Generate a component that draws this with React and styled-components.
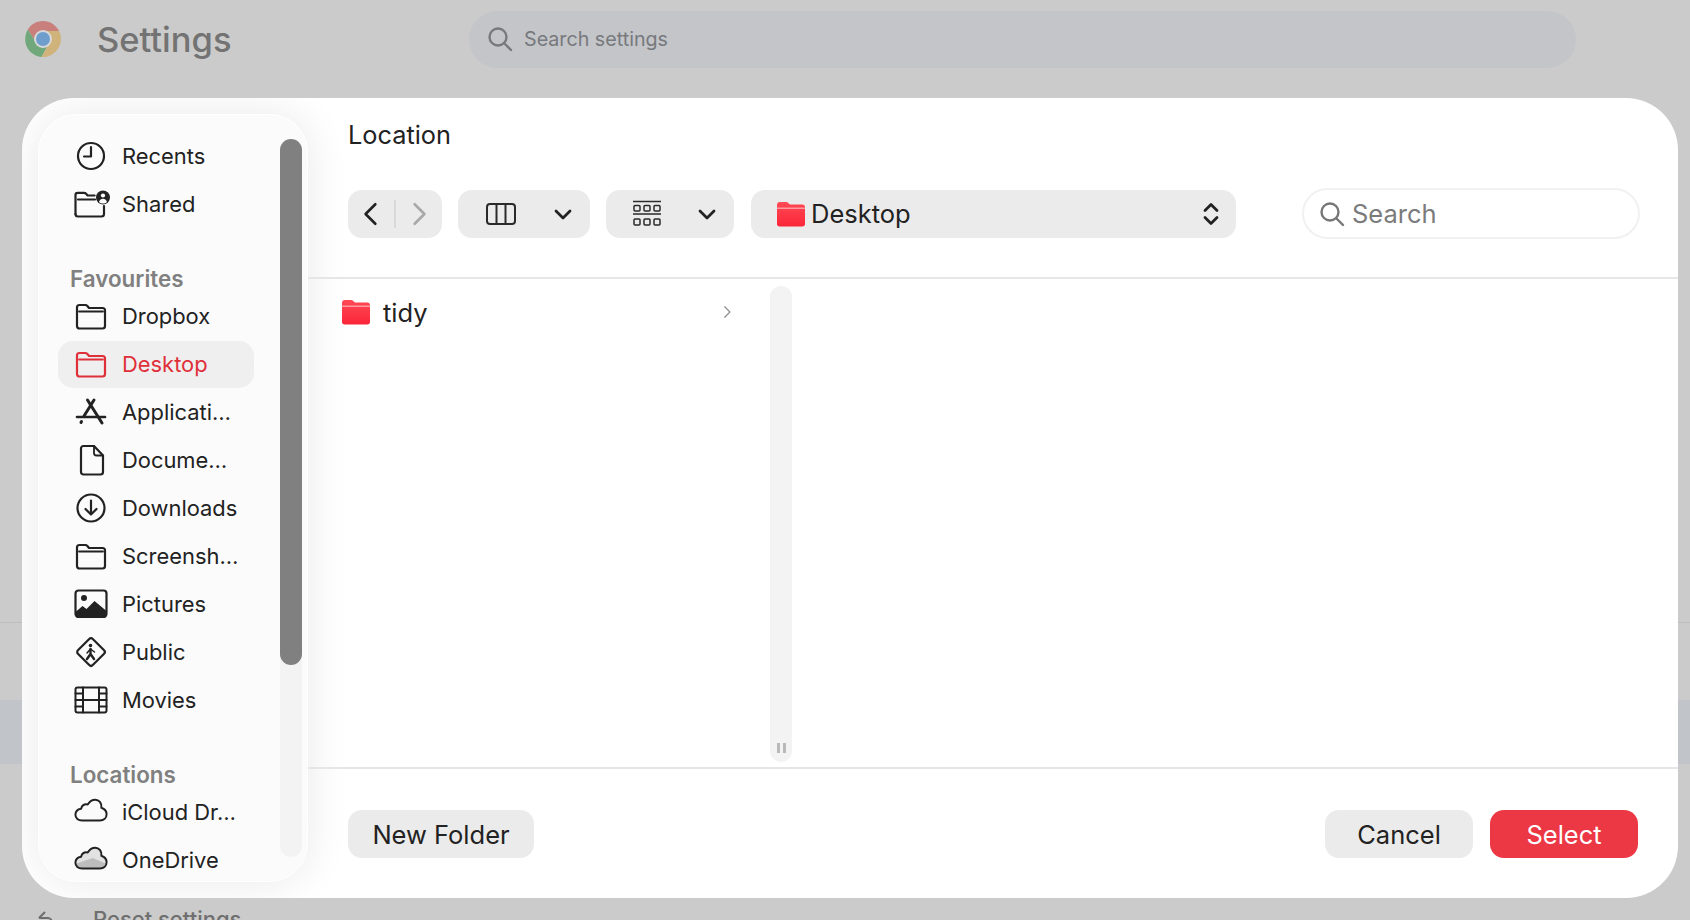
import React from 'react'
import styled, { createGlobalStyle } from 'styled-components'

const GlobalStyle= createGlobalStyle`
  html, body {
    margin: 0;
    padding: 0;
    background: #cbcbcb;
    font-family: Inter, "Liberation Sans", sans-serif;
    -webkit-font-smoothing: antialiased;
  }
`

const Page= styled.div`
  position: relative;
  width: 1690px;
  height: 920px;
  overflow: hidden;
  background: #cbcbcb;
`
const TopBar= styled.header`
  display: flex;
  align-items: center;
  height: 80px;
  padding-left: 25px;
`
const ChromeLogo= styled.svg`
  width: 36px;
  height: 38px;
  margin-top: -2px;
`
const PageTitle= styled.h1`
  margin: -2px 0 0 36px;
  width: 372px;
  font-size: 34.5px;
  font-weight: 500;
  color: #737373;
`
const TopSearch= styled.div`
  display: flex;
  align-items: center;
  gap: 11px;
  width: 1107px;
  height: 57px;
  margin-top: -2px;
  padding-left: 18px;
  box-sizing: border-box;
  border-radius: 29px;
  background: #c3c5c9;
  color: #77797d;
  font-size: 19.7px;
`
const BackNav= styled.nav`
  display: flex;
  flex-direction: column;
  padding-top: 542px;
`
const BackLine= styled.div`
  height: 1px;
  background: #bdbdbd;
`
const BackActive= styled.div`
  height: 64px;
  margin-top: 77px;
  background: #c1c4c8;
`
const BackReset= styled.div`
  display: flex;
  align-items: center;
  gap: 40px;
  margin-top: 142px;
  padding-left: 37px;
  font-size: 22px;
  font-weight: 500;
  color: #6f6f6f;
`

const Modal= styled.div`
  position: absolute;
  left: 22px;
  top: 98px;
  display: flex;
  width: 1656px;
  height: 800px;
  border-radius: 52px;
  overflow: hidden;
  background: #fff;
`
const Sidebar= styled.aside`
  flex: none;
  display: flex;
  width: 270px;
  margin: 16px 0 16px 16px;
  box-sizing: border-box;
  border: 1.5px solid #fff;
  border-radius: 38px;
  background: #fbfbfb;
  box-shadow: 0 0 44px rgba(0, 0, 0, 0.09);
  overflow: hidden;
`
const SideList= styled.div`
  flex: 1;
  min-width: 0;
  padding: 17.5px 0 0 19px;
`
const ScrollTrack= styled.div`
  flex: none;
  width: 22px;
  height: 718px;
  margin: 24px 5px 0 0;
  border-radius: 11px;
  background: #f3f3f3;
`
const ScrollThumb= styled.div`
  height: 526px;
  border-radius: 11px;
  background: #808080;
`
const SideLabel= styled.div`
  display: flex;
  align-items: flex-end;
  height: ${p=> p.$h}px;
  padding-left: 12px;
  font-size: 22.4px;
  line-height: 28px;
  font-weight: 600;
  color: #808080;
`
const SideRow= styled.div`
  display: flex;
  align-items: center;
  gap: 14px;
  height: 47px;
  margin-bottom: 1px;
  padding-left: 16px;
  width: 196px;
  box-sizing: border-box;
  border-radius: 15px;
  font-size: 21.9px;
  white-space: nowrap;
  color: ${p=> p.$active ? '#df303a' : '#222'};
  background: ${p=> p.$active ? '#efefef' : 'transparent'};
`
const IconBox= styled.span`
  flex: none;
  display: flex;
  align-items: center;
  justify-content: center;
  width: 34px;
  height: 34px;
`

const Main= styled.main`
  flex: 1;
  min-width: 0;
  display: flex;
  flex-direction: column;
`
const Head= styled.div`
  flex: none;
  height: 181px;
  padding: 23px 38px 0 40px;
  box-sizing: border-box;
  border-bottom: 2px solid #e6e6e6;
`
const Title= styled.div`
  font-size: 25.3px;
  line-height: 28px;
  color: #222;
`
const Toolbar= styled.div`
  display: flex;
  align-items: center;
  height: 51px;
  margin-top: 39px;
`
const ToolGroup= styled.div`
  flex: none;
  display: flex;
  align-items: center;
  justify-content: ${p=> p.$between ? 'space-between' : 'center'};
  width: ${p=> p.$w}px;
  height: 48px;
  margin-right: ${p=> p.$gap || 16}px;
  padding: ${p=> p.$pad || '0'};
  box-sizing: border-box;
  border-radius: 14px;
  background: #ebebeb;
`
const NavDivider= styled.span`
  width: 2px;
  height: 28px;
  margin: 0 10px;
  background: #d9d9d9;
`
const PathText= styled.span`
  flex: 1;
  margin-left: 5px;
  font-size: 25.5px;
  color: #222;
`
const SearchBox= styled.div`
  flex: none;
  display: flex;
  align-items: center;
  gap: 7px;
  width: 338px;
  height: 51px;
  margin-left: auto;
  padding-left: 15px;
  box-sizing: border-box;
  border: 2px solid #f1f1f1;
  border-radius: 26px;
  font-size: 25.5px;
  color: #7b7b7b;
`
const Browser= styled.section`
  flex: 1;
  min-height: 0;
  display: flex;
`
const Column= styled.div`
  flex: none;
  width: 462px;
  padding: 7px 36px 0 33px;
  box-sizing: border-box;
`
const FileRow= styled.div`
  display: flex;
  align-items: center;
  height: 52px;
  font-size: 25.5px;
  color: #222;
`
const FileName= styled.span`
  flex: 1;
  margin-left: 12px;
`
const ColumnHandle= styled.div`
  flex: none;
  display: flex;
  align-items: flex-end;
  justify-content: center;
  gap: 3px;
  width: 22px;
  height: 476px;
  margin-top: 7px;
  padding-bottom: 9px;
  box-sizing: border-box;
  border-radius: 11px;
  background: #f3f3f3;
`
const HandleMark= styled.i`
  width: 3px;
  height: 10px;
  background: #b9b9b9;
`
const Footer= styled.footer`
  flex: none;
  display: flex;
  align-items: flex-start;
  gap: 17px;
  height: 131px;
  padding: 41px 40px 0 40px;
  box-sizing: border-box;
  border-top: 2px solid #e6e6e6;
`
const Button= styled.button`
  display: block;
  width: ${p=> p.$w}px;
  height: 48px;
  margin-left: ${p=> p.$push ? 'auto' : '0'};
  padding: 0;
  border: none;
  border-radius: 14px;
  font-family: inherit;
  font-size: 25.5px;
  color: ${p=> p.$primary ? '#fff' : '#222'};
  background: ${p=> p.$primary ? '#ec3745' : '#ebebeb'};
`

const Ic= ({ children, w= 34, h= 34, color= 'currentColor', sw= 2.2 })=> (
  <svg width={w} height={h} viewBox={`0 0 ${w} ${h}`} fill='none' stroke={color} strokeWidth={sw} strokeLinecap='round' strokeLinejoin='round'>
    {children}
  </svg>
)

const FolderIcon= ()=> (
  <Ic>
    <path d='M3 10V8.500C3 6.800 4 6 5.500 6h5.700c1 0 1.600.3 2.200 1l1.600 2h13.500C30.200 9 31 10 31 11.500V27c0 1.600-1 2.500-2.500 2.500h-23C4 29.500 3 28.600 3 27z'/>
    <path d='M5 12.500h24' strokeWidth='1.800'/>
  </Ic>
)
const ClockIcon= ()=> (
  <Ic>
    <circle cx='17' cy='17' r='13'/>
    <path d='M17 8v9.500H10'/>
  </Ic>
)
const SharedIcon= ()=> (
  <svg width='34' height='34' viewBox='0 0 34 34' fill='none' stroke='currentColor' strokeWidth='2.200' strokeLinecap='round' strokeLinejoin='round' overflow='visible'>
    <path d='M1.500 27V8c0-1.400.8-2.200 2.200-2.200h6.300c1 0 1.500.3 2.100 1l1.500 1.700h7'/>
    <path d='M4 12.500h17'/>
    <path d='M1.500 27c0 1.500 1 2.500 2.400 2.500h23.500c1.500 0 2.600-1 2.600-2.500v-8'/>
    <circle cx='29' cy='10.500' r='7' fill='currentColor' stroke='none'/>
    <circle cx='29' cy='8.500' r='2.100' fill='#fbfbfb' stroke='none'/>
    <path d='M25 15c.8-2.200 2.200-3.200 4-3.200s3.200 1 4 3.200c-1 1-2.500 1.600-4 1.600s-3-.6-4-1.600z' fill='#fbfbfb' stroke='none'/>
  </svg>
)
const AppsIcon= ()=> (
  <Ic sw='3'>
    <path d='M13.500 5l14.500 23M20 5 10 21'/>
    <path d='M3 22h28' strokeWidth='2.600'/>
    <path d='M7.500 26.500 7 27.500'/>
  </Ic>
)
const DocIcon= ()=> (
  <Ic>
    <path d='M7 5.500C7 4 8 3 9.500 3H20l9 9.500V29c0 1.500-1 2.500-2.500 2.500h-17C8 31.500 7 30.500 7 29z'/>
    <path d='M20 3v7c0 1.500 1 2.500 2.500 2.500H29' strokeWidth='1.800'/>
  </Ic>
)
const DownloadIcon= ()=> (
  <Ic>
    <circle cx='17' cy='17' r='13.500'/>
    <path d='M17 9.500v14M11.500 18l5.500 5.500 5.500-5.500'/>
  </Ic>
)
const PictureIcon= ()=> (
  <svg width='34' height='34' viewBox='0 0 34 34'>
    <rect x='1.500' y='3.500' width='31' height='26' rx='3' fill='none' stroke='currentColor' strokeWidth='2.200'/>
    <circle cx='10' cy='11' r='3' fill='currentColor'/>
    <path d='M1.500 25l7-6 4 3 8-8 12 10v5c0 1-1 2-2 2H3.500c-1 0-2-1-2-2z' fill='currentColor'/>
  </svg>
)
const PublicIcon= ()=> (
  <Ic sw='2.200'>
    <rect x='6.500' y='6.500' width='21' height='21' rx='2.500' transform='rotate(45 17 17)'/>
    <circle cx='16.500' cy='10.500' r='1.800' fill='currentColor' stroke='none'/>
    <path d='M16.500 14v5l-3.500 5M16.500 19l3.500 5' strokeWidth='2.400'/>
    <path d='M13 18l3.500-4 4 3' strokeWidth='1.500'/>
  </Ic>
)
const MoviesIcon= ()=> (
  <Ic sw='2'>
    <rect x='1.500' y='4.500' width='31' height='25' rx='2'/>
    <path d='M9 4.500v25M25 4.500v25M9 17h16M1.500 10.500H9M1.500 17H9M1.500 23.500H9M25 10.500h7.500M25 17h7.500M25 23.500h7.500'/>
  </Ic>
)
const cloudShape= 'M8.500 26C4.500 26 1.500 23.500 1.500 20C1.500 16.500 4 14 7.500 13.500C8.500 10 11.500 8.500 14.500 9C16.500 5.800 19.500 4 22.500 4C26.500 4 29.500 7.500 29 12.500C32 13.500 34.500 16 34.500 19.500C34.500 23.500 31.500 26 27.500 26Z'
const CloudIcon= ({ shade })=> (
  <svg width='36' height='34' viewBox='0 0 36 34' fill='none'>
    <path d={cloudShape} fill={shade ? '#e2e2e2' : 'none'}/>
    {shade && <path d='M2 21 20 15 34 21C34 24 31 26 27.500 26H8.500C5 26 2.500 24 2 21Z' fill='#bdbdbd'/>}
    <path d={cloudShape} stroke='currentColor' strokeWidth='2.100' strokeLinejoin='round'/>
  </svg>
)
const RedFolder= ()=> (
  <svg width='30' height='26' viewBox='0 0 30 26'>
    <defs>
      <linearGradient id='redfold' x1='0' y1='0' x2='0' y2='1'>
        <stop offset='0' stopColor='#ff4a55'/>
        <stop offset='1' stopColor='#fb2539'/>
      </linearGradient>
    </defs>
    <path d='M1 4C1 2 2 1 4 1h6c1 0 1.600.3 2.200 1L14 3.500h12.500c1.500 0 2.500 1 2.500 2.500v17c0 1.500-1 2.500-2.500 2.500h-23C2 25.500 1 24.500 1 23z' fill='url(#redfold)'/>
    <path d='M1 6.500h28V8H1z' fill='#ff9aa0'/>
  </svg>
)
const Chevron= ({ dir= 'down', color= '#222', size= 24, sw= 2.8 })=> {
  const paths= {
    down: 'M5 9l7 7 7-7',
    left: 'M16 3 7 12l9 9',
    right: 'M8 3l9 9-9 9',
  }
  return (
    <svg width={size} height={size} viewBox='0 0 24 24' fill='none' stroke={color} strokeWidth={sw} strokeLinecap='round' strokeLinejoin='round'>
      <path d={paths[dir]}/>
    </svg>
  )
}
const Magnifier= ({ size= 26, color= '#777' })=> (
  <svg width={size} height={size} viewBox='0 0 26 26' fill='none' stroke={color} strokeWidth='2.400' strokeLinecap='round'>
    <circle cx='11' cy='11' r='8.500'/>
    <path d='m17.500 17.500 6.500 6.500'/>
  </svg>
)

const Items= {
  top: [
    ['Recents', <ClockIcon/>],
    ['Shared', <SharedIcon/>],
  ],
  favourites: [
    ['Dropbox', <FolderIcon/>],
    ['Desktop', <FolderIcon/>, true],
    ['Applicati…', <AppsIcon/>],
    ['Docume…', <DocIcon/>],
    ['Downloads', <DownloadIcon/>],
    ['Screensh…', <FolderIcon/>],
    ['Pictures', <PictureIcon/>],
    ['Public', <PublicIcon/>],
    ['Movies', <MoviesIcon/>],
  ],
  locations: [
    ['iCloud Dr…', <CloudIcon/>],
    ['OneDrive', <CloudIcon shade/>],
  ],
}

const renderRows= (rows)=> rows.map(([label, icon, active])=> (
  <SideRow key={label} $active={active}>
    <IconBox>{icon}</IconBox>
    {label}
  </SideRow>
))

export default function App() {
  return (
    <Page>
      <GlobalStyle/>
      <TopBar>
        <ChromeLogo viewBox='0 0 36 38'>
          <path d='M18 1C11.500 1 5.800 4.500 2.800 9.500L10 21c-.3-7 4-10 8-10h16C31 5 25 1 18 1z' fill='#c97f7c'/>
          <path d='M2.800 9.500C-2 18-.3 29 9 34.500c2.300 1.400 5 2.300 7.500 2.500L22 27c-6 1.500-10-2-12-6z' fill='#70a87b'/>
          <path d='M34 11H18c4 0 8 3 8 8 0 3-2 6-4 8l-5.500 10C28 38 36 28 36 19c0-3-.8-6-2-8z' fill='#cfb37b'/>
          <circle cx='18' cy='19' r='9' fill='#d8d8d8'/>
          <circle cx='18' cy='19' r='7' fill='#6f9ecd'/>
        </ChromeLogo>
        <PageTitle>Settings</PageTitle>
        <TopSearch>
          <Magnifier color='#77797d'/>
          Search settings
        </TopSearch>
      </TopBar>
      <BackNav>
        <BackLine/>
        <BackActive/>
        <BackReset>
          <svg width='16' height='16' viewBox='0 0 16 16' fill='none' stroke='#6f6f6f' strokeWidth='2'><path d='M2 7 8 1M2 7h9c2 0 4 2 4 5v4'/></svg>
          Reset settings
        </BackReset>
      </BackNav>

      <Modal>
        <Sidebar>
          <SideList>
            {renderRows(Items.top)}
            <SideLabel $h={64}>Favourites</SideLabel>
            {renderRows(Items.favourites)}
            <SideLabel $h={64}>Locations</SideLabel>
            {renderRows(Items.locations)}
          </SideList>
          <ScrollTrack><ScrollThumb/></ScrollTrack>
        </Sidebar>
        <Main>
          <Head>
            <Title>Location</Title>
            <Toolbar>
              <ToolGroup $w={94}>
                <Chevron dir='left' size={26} sw={2.4}/>
                <NavDivider/>
                <Chevron dir='right' size={26} sw={2.4} color='#a8a8a8'/>
              </ToolGroup>
              <ToolGroup $w={132} $between $pad='0 15px 0 28px'>
                <svg width='30' height='24' viewBox='0 0 30 24' fill='none' stroke='#2a2a2a' strokeWidth='2'>
                  <rect x='1' y='2' width='28' height='20' rx='3'/>
                  <path d='M10.500 2v20M19.500 2v20'/>
                </svg>
                <Chevron/>
              </ToolGroup>
              <ToolGroup $w={128} $between $gap={17} $pad='0 15px 0 27px'>
                <svg width='28' height='28' viewBox='0 0 28 28' fill='none' stroke='#2a2a2a' strokeWidth='1.500'>
                  <path d='M0 1.500h28M0 14h28'/>
                  <rect x='1' y='5.500' width='6' height='5.500' rx='1'/>
                  <rect x='11' y='5.500' width='6' height='5.500' rx='1'/>
                  <rect x='21' y='5.500' width='6' height='5.500' rx='1'/>
                  <rect x='1' y='19' width='6' height='6' rx='1'/>
                  <rect x='11' y='19' width='6' height='6' rx='1'/>
                  <rect x='21' y='19' width='6' height='6' rx='1'/>
                </svg>
                <Chevron/>
              </ToolGroup>
              <ToolGroup $w={485} $gap={0} $pad='0 15px 0 25px'>
                <RedFolder/>
                <PathText>Desktop</PathText>
                <svg width='20' height='26' viewBox='0 0 20 26' fill='none' stroke='#222' strokeWidth='2.800' strokeLinecap='round' strokeLinejoin='round'>
                  <path d='M4 9.500 10 3.500l6 6M4 16.500l6 6 6-6'/>
                </svg>
              </ToolGroup>
              <SearchBox>
                <Magnifier/>
                Search
              </SearchBox>
            </Toolbar>
          </Head>
          <Browser>
            <Column>
              <FileRow>
                <RedFolder/>
                <FileName>tidy</FileName>
                <Chevron dir='right' size={14} sw={2} color='#8a8a8a'/>
              </FileRow>
            </Column>
            <ColumnHandle>
              <HandleMark/>
              <HandleMark/>
            </ColumnHandle>
          </Browser>
          <Footer>
            <Button $w={186}>New Folder</Button>
            <Button $w={148} $push>Cancel</Button>
            <Button $w={148} $primary>Select</Button>
          </Footer>
        </Main>
      </Modal>
    </Page>
  )
}
